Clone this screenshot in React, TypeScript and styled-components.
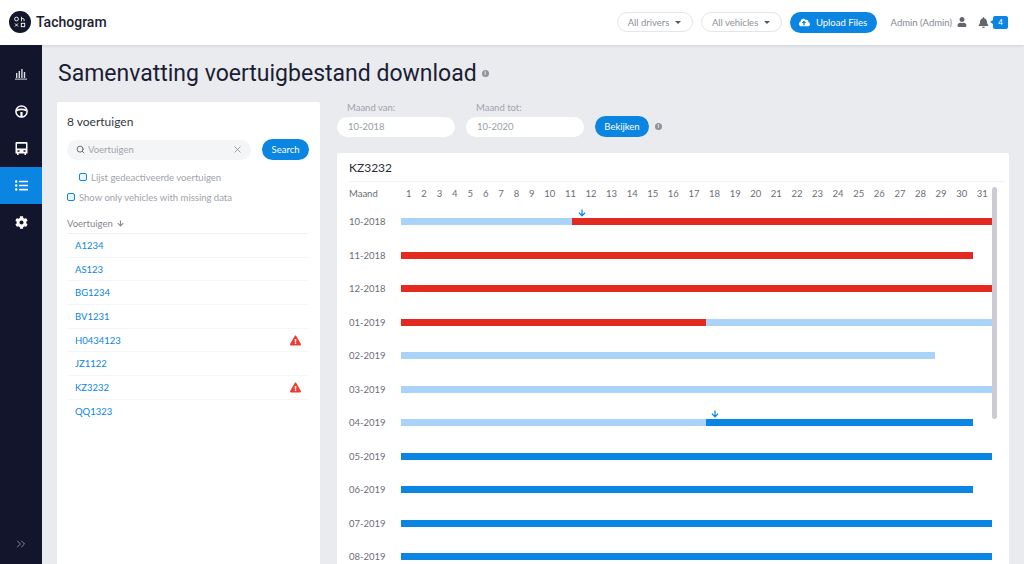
import React from 'react';
import styled, { createGlobalStyle } from 'styled-components';
import { FaArrowDown, FaBell, FaCloudUploadAlt, FaCog, FaExclamationTriangle, FaListUl, FaUser } from 'react-icons/fa';
import { ChevronsRight, Search, X } from 'lucide-react';

const BLUE = '#0a85e2';
const LIGHT = '#a9d3f9';
const RED = '#e42a20';

const GlobalStyle = createGlobalStyle`
  html, body { margin: 0; padding: 0; height: 100%; overflow: hidden; }
  body { background: #e9ebef; font-family: Lato, "Noto Sans", sans-serif; color: #7c7f88; }
  * { box-sizing: border-box; }
`;

const Page = styled.div`
  width: 1024px;
  height: 564px;
  display: flex;
  flex-direction: column;
  overflow: hidden;
`;

const Header = styled.header`
  height: 45px;
  flex: none;
  background: #fff;
  display: flex;
  align-items: center;
  padding: 3px 16px 4px 9px;
  box-shadow: 0 1px 3px rgba(30, 35, 60, 0.12);
  z-index: 2;
`;

const Brand = styled.div`
  display: flex;
  align-items: center;
  gap: 5px;
  font-family: Roboto, sans-serif;
  font-weight: 500;
  font-size: 14px;
  color: #1b1e33;
  margin-right: auto;
`;

const Pill = styled.div<{ $w: number }>`
  width: ${({ $w }) => $w}px;
  height: 20px;
  border: 1px solid #e3e5ea;
  border-radius: 10px;
  display: flex;
  align-items: center;
  justify-content: center;
  gap: 6px;
  font-size: 9.5px;
  color: #8d9098;
  margin-right: 8px;
`;

const Caret = styled.span`
  width: 0;
  height: 0;
  border-left: 3.5px solid transparent;
  border-right: 3.5px solid transparent;
  border-top: 3.5px solid #55585f;
`;

const UploadButton = styled.button`
  width: 87px;
  height: 21px;
  border: 0;
  border-radius: 11px;
  background: ${BLUE};
  color: #fff;
  font: inherit;
  font-size: 9.5px;
  display: flex;
  align-items: center;
  justify-content: center;
  gap: 6px;
  padding: 0;
  margin-right: 14px;
`;

const AdminName = styled.span`
  font-size: 9.5px;
  color: #85888f;
  margin-right: 5px;
`;

const Badge = styled.span`
  position: relative;
  width: 15px;
  height: 13px;
  margin-left: 4px;
  border-radius: 2px;
  background: ${BLUE};
  color: #fff;
  font-size: 8px;
  display: flex;
  align-items: center;
  justify-content: center;

  &::before {
    content: '';
    position: absolute;
    left: -3px;
    top: 4px;
    border-top: 2.5px solid transparent;
    border-bottom: 2.5px solid transparent;
    border-right: 3px solid ${BLUE};
  }
`;

const Body = styled.div`
  flex: 1;
  display: flex;
  min-height: 0;
`;

const Sidebar = styled.nav`
  width: 42px;
  flex: none;
  background: #12152c;
  display: flex;
  flex-direction: column;
  padding-top: 10.5px;
  color: #fff;
`;

const NavItem = styled.div<{ $active?: boolean }>`
  height: 37px;
  display: flex;
  align-items: center;
  justify-content: center;
  background: ${({ $active }) => ($active ? BLUE : 'transparent')};
`;

const SidebarToggle = styled.div`
  margin-top: auto;
  height: 40px;
  display: flex;
  align-items: center;
  justify-content: center;
  color: #b9bbc6;
`;

const Main = styled.main`
  flex: 1;
  padding: 0 15px 0 15px;
  min-width: 0;
`;

const Title = styled.h1`
  margin: 0;
  height: 57px;
  display: flex;
  align-items: center;
  gap: 5px;
  padding: 0 0 0 1px;
  font-family: Roboto, sans-serif;
  font-weight: 400;
  font-size: 23px;
  color: #1b1e33;
`;

const InfoDot = styled.span`
  width: 7px;
  height: 7px;
  border-radius: 50%;
  background: #8f929a;
  display: inline-flex;
  align-items: center;
  justify-content: center;
  color: #fff;
  font-size: 5px;
  line-height: 1;
  font-weight: 700;
`;

const Columns = styled.div`
  display: flex;
  gap: 17px;
`;

const Panel = styled.section`
  width: 263px;
  height: 600px;
  flex: none;
  background: #fff;
  border-radius: 2px;
  padding: 12px 11px 0 10px;
`;

const PanelTitle = styled.div`
  font-size: 12px;
  color: #33363f;
  line-height: 15px;
  height: 25px;
`;

const SearchRow = styled.div`
  display: flex;
  align-items: center;
  justify-content: space-between;
  padding-right: 0;
`;

const SearchField = styled.div`
  width: 184px;
  height: 20px;
  border-radius: 10px;
  background: #f4f5f7;
  display: flex;
  align-items: center;
  gap: 3px;
  padding: 0 8px 0 9px;
  font-size: 9.5px;
  color: #a2a5ac;
  & > span { flex: 1; }
`;

const SearchButton = styled.button`
  width: 47px;
  height: 21px;
  border: 0;
  border-radius: 11px;
  background: ${BLUE};
  color: #fff;
  font: inherit;
  font-size: 9.5px;
  padding: 0;
`;

const CheckRow = styled.label<{ $indent?: boolean }>`
  display: flex;
  align-items: center;
  gap: 4px;
  height: 20px;
  padding-left: ${({ $indent }) => ($indent ? 12 : 0)}px;
  font-size: 9.5px;
  color: #a0a3aa;
`;

const CheckBox = styled.span`
  width: 8px;
  height: 8px;
  border: 1.5px solid ${BLUE};
  border-radius: 2px;
  background: #eef4fb;
`;

const Checks = styled.div`
  margin-top: 7px;
`;

const ListHead = styled.div`
  margin-top: 4px;
  height: 23px;
  display: flex;
  align-items: center;
  gap: 4px;
  padding-top: 3px;
  border-bottom: 1px solid #f0f1f3;
  font-size: 9.5px;
  color: #85888f;
  margin-right: 1px;
`;

const VehicleRow = styled.div`
  height: 23.7px;
  display: flex;
  align-items: center;
  justify-content: space-between;
  padding: 0 8px;
  border-bottom: 1px solid #f5f6f7;
  font-size: 9.5px;
  color: ${BLUE};
  &:last-child { border-bottom: 0; }
`;

const RightColumn = styled.div`
  width: 672px;
  flex: none;
`;

const Filters = styled.div`
  height: 51px;
  display: flex;
  align-items: flex-start;
  gap: 11px;
`;

const FilterField = styled.div`
  width: 118px;
  display: flex;
  flex-direction: column;
  font-size: 9.5px;
  color: #a0a3aa;
`;

const FilterLabel = styled.div`
  height: 15px;
  line-height: 12px;
  padding-left: 10px;
`;

const FilterInput = styled.div`
  height: 20px;
  border-radius: 10px;
  background: #fff;
  padding-left: 11px;
  line-height: 20px;
  color: #9a9da4;
`;

const ViewButton = styled.button`
  width: 54px;
  height: 21px;
  margin-top: 14px;
  border: 0;
  border-radius: 11px;
  background: ${BLUE};
  color: #fff;
  font: inherit;
  font-size: 9.5px;
  padding: 0;
`;

const FilterInfo = styled.div`
  height: 21px;
  margin: 14px 0 0 -5px;
  display: flex;
  align-items: center;
`;

const ChartCard = styled.section`
  height: 600px;
  background: #fff;
  border-radius: 2px;
  padding: 0 4px 0 12px;
`;

const ChartTitle = styled.div`
  height: 29px;
  display: flex;
  align-items: center;
  font-size: 12px;
  color: #2a2d38;
  padding-left: 0;
  border-bottom: 1px solid #f3f4f6;
`;

const ChartBody = styled.div`
  position: relative;
`;

const Scrollbar = styled.div`
  position: absolute;
  left: 643px;
  top: 5px;
  width: 5px;
  height: 232px;
  border-radius: 3px;
  background: #cbccd3;
`;

const ChartHead = styled.div`
  height: 23px;
  display: flex;
  align-items: center;
  font-size: 9.5px;
  color: #6b6e77;
`;

const MonthLabel = styled.div`
  width: 52px;
  flex: none;
  font-size: 9.5px;
  color: #6b6e77;
`;

const Days = styled.div`
  display: grid;
  grid-template-columns: repeat(9, 15.4px) repeat(22, 20.6px);
  text-align: center;
`;

const MonthRow = styled.div`
  height: 33.5px;
  display: flex;
  align-items: center;
`;

const Track = styled.div`
  position: relative;
  display: flex;
  height: 7px;
`;

const Segment = styled.div<{ $w: number; $color: string }>`
  width: ${({ $w }) => $w}px;
  background: ${({ $color }) => $color};
`;

const Marker = styled.div<{ $left: number }>`
  position: absolute;
  left: ${({ $left }) => $left - 4}px;
  top: -9px;
  color: ${BLUE};
  line-height: 0;
`;

const vehicles: { name: string; warning?: boolean }[] = [
  { name: 'A1234' },
  { name: 'AS123' },
  { name: 'BG1234' },
  { name: 'BV1231' },
  { name: 'H0434123', warning: true },
  { name: 'JZ1122' },
  { name: 'KZ3232', warning: true },
  { name: 'QQ1323' },
];

const months: { label: string; parts: [number, string][]; marker?: number }[] = [
  { label: '10-2018', parts: [[171, LIGHT], [420, RED]], marker: 181 },
  { label: '11-2018', parts: [[572, RED]] },
  { label: '12-2018', parts: [[591, RED]] },
  { label: '01-2019', parts: [[305, RED], [286, LIGHT]] },
  { label: '02-2019', parts: [[534, LIGHT]] },
  { label: '03-2019', parts: [[591, LIGHT]] },
  { label: '04-2019', parts: [[305, LIGHT], [267, BLUE]], marker: 314 },
  { label: '05-2019', parts: [[591, BLUE]] },
  { label: '06-2019', parts: [[572, BLUE]] },
  { label: '07-2019', parts: [[591, BLUE]] },
  { label: '08-2019', parts: [[591, BLUE]] },
];

const Logo = () => (
  <svg width="22" height="22" viewBox="0 0 22 22">
    <circle cx="11" cy="11" r="11" fill="#14162b" />
    <g fill="none" stroke="#fff" strokeWidth="0.9">
      <circle cx="7.5" cy="8" r="1.9" />
      <path d="M12.5 5.8v4.4M12.5 8.2c.3-.9 2.6-1 2.6.3v1.7" />
      <path d="M6 12.5l3 3M9 12.5l-3 3" />
      <rect x="12.3" y="12.3" width="3.4" height="3.4" />
    </g>
  </svg>
);

const ChartIcon = () => (
  <svg width="12" height="12" viewBox="0 0 12 12" fill="#d9dbe4">
    <rect x="1" y="5" width="1.4" height="5" />
    <rect x="3.6" y="3" width="1.4" height="7" />
    <rect x="6.2" y="1" width="1.4" height="9" />
    <rect x="8.8" y="4" width="1.4" height="6" />
    <rect x="0" y="10.6" width="12" height="1" />
  </svg>
);

const WheelIcon = () => (
  <svg width="13" height="13" viewBox="0 0 13 13" fill="none" stroke="#fff">
    <circle cx="6.5" cy="6.5" r="5.6" strokeWidth="1.5" />
    <path d="M1.2 5.6c3-1.3 7.6-1.3 10.6 0" strokeWidth="1.7" />
    <path d="M6.5 7v5" strokeWidth="2.2" />
  </svg>
);

const BusIcon = () => (
  <svg width="13" height="13" viewBox="0 0 13 13">
    <path
      fill="#fff"
      fillRule="evenodd"
      d="M1.5 0h10A1 1 0 0 1 12.500 1v10.500h-1.500V13H9.500v-1.500h-6V13H2v-1.500H.5V1a1 1 0 0 1 1-1zM2 1.800v4.700h9V1.800zM2.500 8.200v1.600h2V8.200zm6 0v1.600h2V8.200z"
    />
  </svg>
);

const App: React.FC = () => {
  return (
    <Page>
      <GlobalStyle />
      <Header>
        <Brand>
          <Logo />
          Tachogram
        </Brand>
        <Pill $w={76}>
          All drivers <Caret />
        </Pill>
        <Pill $w={81}>
          All vehicles <Caret />
        </Pill>
        <UploadButton>
          <FaCloudUploadAlt size={11} />
          Upload Files
        </UploadButton>
        <AdminName>Admin (Admin)</AdminName>
        <FaUser size={10} color="#62656c" style={{ marginRight: 11 }} />
        <FaBell size={11} color="#62656c" />
        <Badge>4</Badge>
      </Header>
      <Body>
        <Sidebar>
          <NavItem><ChartIcon /></NavItem>
          <NavItem><WheelIcon /></NavItem>
          <NavItem><BusIcon /></NavItem>
          <NavItem $active><FaListUl size={13} /></NavItem>
          <NavItem><FaCog size={13} /></NavItem>
          <SidebarToggle><ChevronsRight size={14} strokeWidth={1.2} /></SidebarToggle>
        </Sidebar>
        <Main>
          <Title>
            Samenvatting voertuigbestand download <InfoDot>i</InfoDot>
          </Title>
          <Columns>
            <Panel>
              <PanelTitle>8 voertuigen</PanelTitle>
              <SearchRow>
                <SearchField>
                  <Search size={9} color="#62656c" strokeWidth={2.5} />
                  <span>Voertuigen</span>
                  <X size={11} color="#7c7f88" strokeWidth={1.5} />
                </SearchField>
                <SearchButton>Search</SearchButton>
              </SearchRow>
              <Checks>
                <CheckRow $indent>
                  <CheckBox /> Lijst gedeactiveerde voertuigen
                </CheckRow>
                <CheckRow>
                  <CheckBox /> Show only vehicles with missing data
                </CheckRow>
              </Checks>
              <ListHead>
                Voertuigen <FaArrowDown size={7} color="#85888f" />
              </ListHead>
              {vehicles.map((v) => (
                <VehicleRow key={v.name}>
                  {v.name}
                  {v.warning && <FaExclamationTriangle size={11} color="#ee3b32" />}
                </VehicleRow>
              ))}
            </Panel>
            <RightColumn>
              <Filters>
                <FilterField>
                  <FilterLabel>Maand van:</FilterLabel>
                  <FilterInput>10-2018</FilterInput>
                </FilterField>
                <FilterField>
                  <FilterLabel>Maand tot:</FilterLabel>
                  <FilterInput>10-2020</FilterInput>
                </FilterField>
                <ViewButton>Bekijken</ViewButton>
                <FilterInfo><InfoDot>i</InfoDot></FilterInfo>
              </Filters>
              <ChartCard>
                <ChartTitle>KZ3232</ChartTitle>
                <ChartBody>
                  <Scrollbar />
                  <ChartHead>
                    <MonthLabel>Maand</MonthLabel>
                    <Days>
                      {Array.from({ length: 31 }, (_, i) => (
                        <span key={i}>{i + 1}</span>
                      ))}
                    </Days>
                  </ChartHead>
                  {months.map((m) => (
                    <MonthRow key={m.label}>
                      <MonthLabel>{m.label}</MonthLabel>
                      <Track>
                        {m.parts.map(([w, color], i) => (
                          <Segment key={i} $w={w} $color={color} />
                        ))}
                        {m.marker !== undefined && (
                          <Marker $left={m.marker}><FaArrowDown size={8} /></Marker>
                        )}
                      </Track>
                    </MonthRow>
                  ))}
                </ChartBody>
              </ChartCard>
            </RightColumn>
          </Columns>
        </Main>
      </Body>
    </Page>
  );
};

export default App;
